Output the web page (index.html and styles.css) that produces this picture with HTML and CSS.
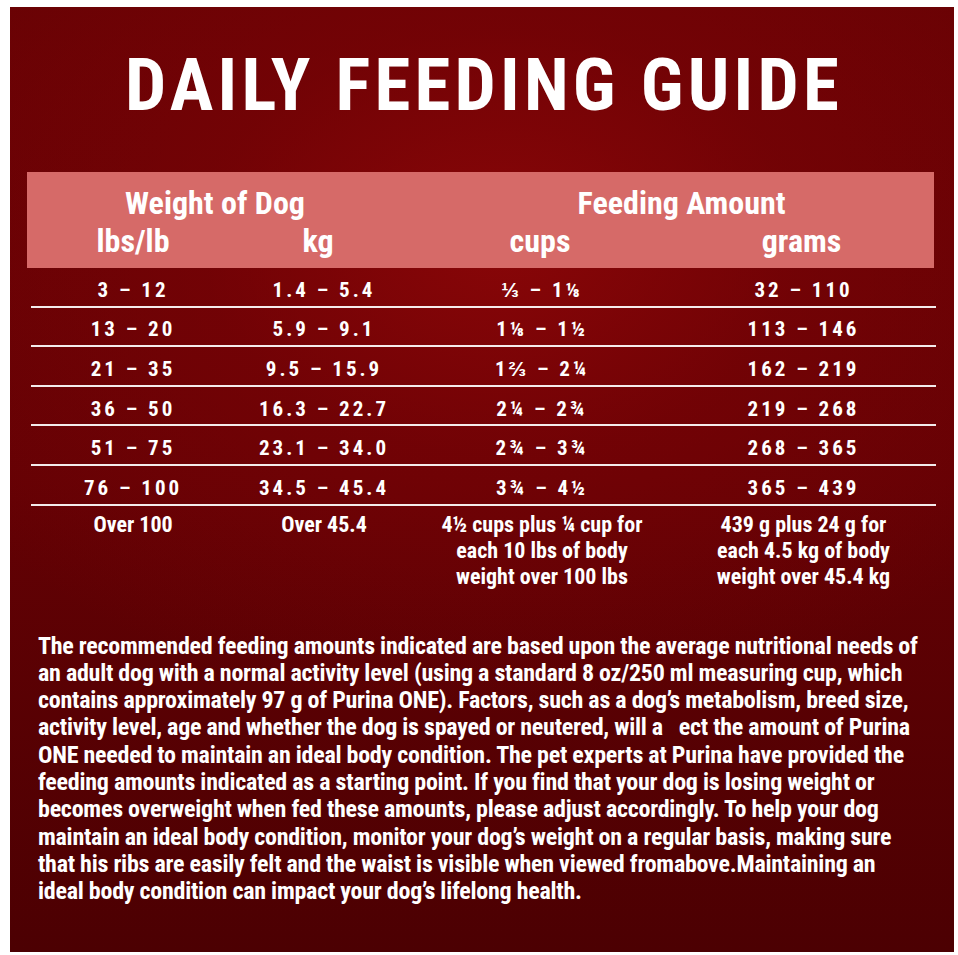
FILE: index.html
```html
<!DOCTYPE html>
<html>
<head>
<meta charset="utf-8">
<link rel="stylesheet" href="styles.css">
</head>
<body>
<div class="panel">
  <h1 class="title">DAILY FEEDING GUIDE</h1>
  <div class="table">
    <div class="head">
      <div class="group g1">Weight of Dog</div>
      <div class="group g2">Feeding Amount</div>
      <div class="sub s1">lbs/lb</div>
      <div class="sub s2">kg</div>
      <div class="sub s3">cups</div>
      <div class="sub s4">grams</div>
    </div>
    <div class="row"><span>3 – 12</span><span>1.4 – 5.4</span><span>⅓ – 1⅛</span><span>32 – 110</span></div>
    <div class="row"><span>13 – 20</span><span>5.9 – 9.1</span><span>1⅛ – 1½</span><span>113 – 146</span></div>
    <div class="row"><span>21 – 35</span><span>9.5 – 15.9</span><span>1⅔ – 2¼</span><span>162 – 219</span></div>
    <div class="row"><span>36 – 50</span><span>16.3 – 22.7</span><span>2¼ – 2¾</span><span>219 – 268</span></div>
    <div class="row"><span>51 – 75</span><span>23.1 – 34.0</span><span>2¾ – 3¾</span><span>268 – 365</span></div>
    <div class="row"><span>76 – 100</span><span>34.5 – 45.4</span><span>3¾ – 4½</span><span>365 – 439</span></div>
    <div class="last">
      <span>Over 100</span>
      <span>Over 45.4</span>
      <span>4½ cups plus ¼ cup for<br>each 10 lbs of body<br>weight over 100 lbs</span>
      <span>439 g plus 24 g for<br>each 4.5 kg of body<br>weight over 45.4 kg</span>
    </div>
  </div>
  <p class="note">The recommended feeding amounts indicated are based upon the average nutritional needs of<br>an adult dog with a normal activity level (using a standard 8 oz/250 ml measuring cup, which<br>contains approximately 97 g of Purina ONE). Factors, such as a dog’s metabolism, breed size,<br>activity level, age and whether the dog is spayed or neutered, will a&nbsp;&nbsp; ect the amount of Purina<br>ONE needed to maintain an ideal body condition. The pet experts at Purina have provided the<br>feeding amounts indicated as a starting point. If you find that your dog is losing weight or<br>becomes overweight when fed these amounts, please adjust accordingly. To help your dog<br>maintain an ideal body condition, monitor your dog’s weight on a regular basis, making sure<br>that his ribs are easily felt and the waist is visible when viewed fromabove.Maintaining an<br>ideal body condition can impact your dog’s lifelong health.</p>
</div>
</body>
</html>
```
FILE: styles.css
```css
html, body {
  margin: 0;
  padding: 0;
  background: #ffffff;
}
body {
  width: 958px;
  height: 955px;
  overflow: hidden;
  font-family: "Roboto Condensed", "Open Sans", sans-serif;
  font-weight: bold;
  color: #ffffff;
}
.panel {
  margin: 7px 0 0 10px;
  width: 944px;
  height: 945px;
  box-sizing: border-box;
  padding-top: 1px;
  background:
    radial-gradient(ellipse 70% 50% at 52% 25%, rgba(138, 6, 8, 0.95) 0%, rgba(122, 3, 6, 0.6) 45%, rgba(100, 0, 3, 0) 100%),
    linear-gradient(180deg, #680204 0%, #640104 50%, #4c0002 100%);
  overflow: hidden;
}
.title {
  margin: 39px 0 0 0;
  padding-left: 4px;
  font-family: "Roboto", sans-serif;
  font-stretch: 85%;
  font-size: 73px;
  line-height: 76px;
  font-weight: bold;
  letter-spacing: 4.2px;
  text-align: center;
}
.table {
  margin: 49px 0 0 17px;
  width: 907px;
}
.head {
  background: #d66a68;
  display: grid;
  grid-template-columns: 204px 178px 258px 267px;
  padding: 12px 0 8px 4px;
  font-size: 32px;
  line-height: 38px;
  text-align: center;
}
.g1 { grid-column: 1 / 3; padding-right: 14px; }
.g2 { grid-column: 3 / 5; padding-left: 12px; }
.s2 { padding-right: 12px; }
.s3 { padding-right: 4px; }
.s4 { padding-right: 6px; }
.row {
  display: grid;
  grid-template-columns: 204px 178px 258px 265px;
  height: 37.6px;
  border-bottom: 2px solid rgba(255, 255, 255, 0.92);
  margin-left: 4px;
  margin-right: -2px;
  align-items: center;
  font-size: 21px;
  letter-spacing: 3px;
  text-align: center;
}
.row span { display: block; padding-top: 6px; }
.last {
  display: grid;
  grid-template-columns: 204px 178px 258px 265px;
  margin-left: 4px;
  padding-top: 6px;
  font-size: 22px;
  line-height: 26px;
  text-align: center;
}
.note {
  margin: 43px 0 0 28px;
  font-size: 24px;
  line-height: 27.3px;
  letter-spacing: -0.25px;
  white-space: nowrap;
}
```
